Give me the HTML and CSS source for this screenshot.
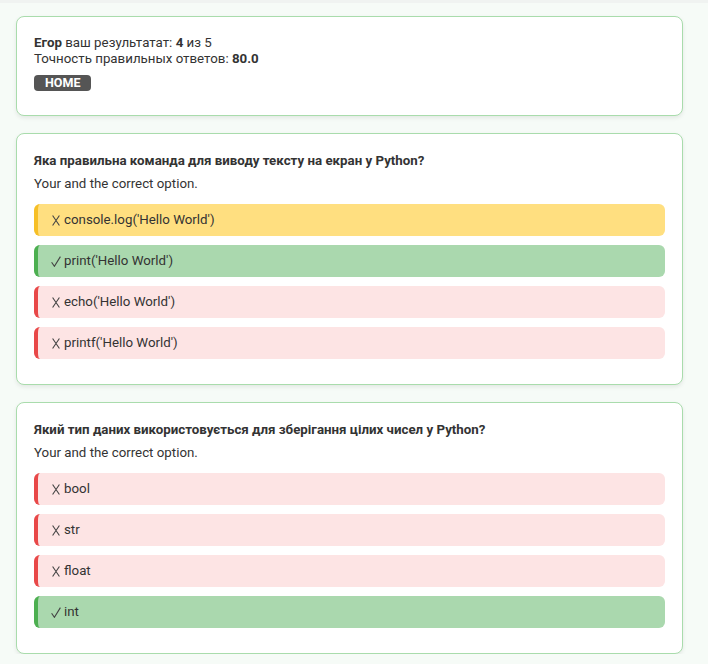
FILE: index.html
```html
<!DOCTYPE html>
<html lang="uk">
<head>
<meta charset="utf-8">
<title>Результат</title>
<link rel="stylesheet" href="styles.css">
</head>
<body>
<div class="topline"></div>
<main class="page">
  <section class="card summary">
    <p class="line"><b>Егор</b> ваш результатат: <b>4</b> из 5</p>
    <p class="line">Точность правильных ответов: <b>80.0</b></p>
    <a class="home" href="#">HOME</a>
  </section>

  <section class="card question">
    <h3 class="q-title">Яка правильна команда для виводу тексту на екран у Python?</h3>
    <p class="q-desc">Your and the correct option.</p>
    <div class="opt yours"><svg class="mark x" viewBox="0 0 8 11"><path d="M0.6 0.5L7.4 10.5M7.4 0.5L0.6 10.5"/></svg>console.log('Hello World')</div>
    <div class="opt right"><svg class="mark v" viewBox="0 0 10 11"><path d="M0.6 6.2L3.4 10.3L9.4 0.6"/></svg>print('Hello World')</div>
    <div class="opt wrong"><svg class="mark x" viewBox="0 0 8 11"><path d="M0.6 0.5L7.4 10.5M7.4 0.5L0.6 10.5"/></svg>echo('Hello World')</div>
    <div class="opt wrong"><svg class="mark x" viewBox="0 0 8 11"><path d="M0.6 0.5L7.4 10.5M7.4 0.5L0.6 10.5"/></svg>printf('Hello World')</div>
  </section>

  <section class="card question">
    <h3 class="q-title">Який тип даних використовується для зберігання цілих чисел у Python?</h3>
    <p class="q-desc">Your and the correct option.</p>
    <div class="opt wrong"><svg class="mark x" viewBox="0 0 8 11"><path d="M0.6 0.5L7.4 10.5M7.4 0.5L0.6 10.5"/></svg>bool</div>
    <div class="opt wrong"><svg class="mark x" viewBox="0 0 8 11"><path d="M0.6 0.5L7.4 10.5M7.4 0.5L0.6 10.5"/></svg>str</div>
    <div class="opt wrong"><svg class="mark x" viewBox="0 0 8 11"><path d="M0.6 0.5L7.4 10.5M7.4 0.5L0.6 10.5"/></svg>float</div>
    <div class="opt right"><svg class="mark v" viewBox="0 0 10 11"><path d="M0.6 6.2L3.4 10.3L9.4 0.6"/></svg>int</div>
  </section>
</main>
</body>
</html>
```

FILE: styles.css
```css
html, body {
  margin: 0;
  padding: 0;
}
body {
  background: #f6fbf7;
  font-family: Roboto, "Liberation Sans", sans-serif;
  font-size: 13.3px;
  color: #333;
}
.topline {
  height: 3px;
  background: #f0f3f1;
}
.page {
  padding: 13px 0 0 16px;
  display: flex;
  flex-direction: column;
  gap: 17px;
}
.card {
  width: 667px;
  box-sizing: border-box;
  background: #fff;
  border: 1px solid #a9dcac;
  border-radius: 8px;
  box-shadow: 0 2px 4px rgba(0, 0, 0, 0.08);
  padding: 18px 17px 17px;
}
.summary {
  height: 100px;
}
.line {
  margin: 0;
  line-height: 16px;
}
.line b {
  font-weight: 700;
}
.home {
  display: inline-block;
  margin-top: 8px;
  background: #555;
  color: #fff;
  font-weight: 700;
  font-size: 12.5px;
  line-height: 16px;
  padding: 0 11px;
  border-radius: 4px;
  text-decoration: none;
}
.question {
  height: 252px;
}
.q-title {
  margin: 0;
  font-size: 13.3px;
  font-weight: 700;
  line-height: 18px;
}
.q-desc {
  margin: 6px 0 12px;
  line-height: 16px;
}
.opt {
  height: 32px;
  box-sizing: border-box;
  display: flex;
  align-items: center;
  padding-left: 14px;
  border-left: 4px solid transparent;
  border-radius: 6px;
  margin-bottom: 9px;
  line-height: 16px;
}
.mark {
  fill: none;
  stroke: #444;
  stroke-width: 1.1;
  flex: none;
}
.mark.x {
  width: 8px;
  height: 11px;
  margin-right: 4px;
}
.mark.v {
  width: 10px;
  height: 11px;
  margin-left: -1px;
  margin-right: 3px;
}
.yours {
  background: #ffdf80;
  border-left-color: #f6bf26;
}
.right {
  background: #aad8ae;
  border-left-color: #4caf50;
}
.wrong {
  background: #fde4e4;
  border-left-color: #e84848;
}
```
